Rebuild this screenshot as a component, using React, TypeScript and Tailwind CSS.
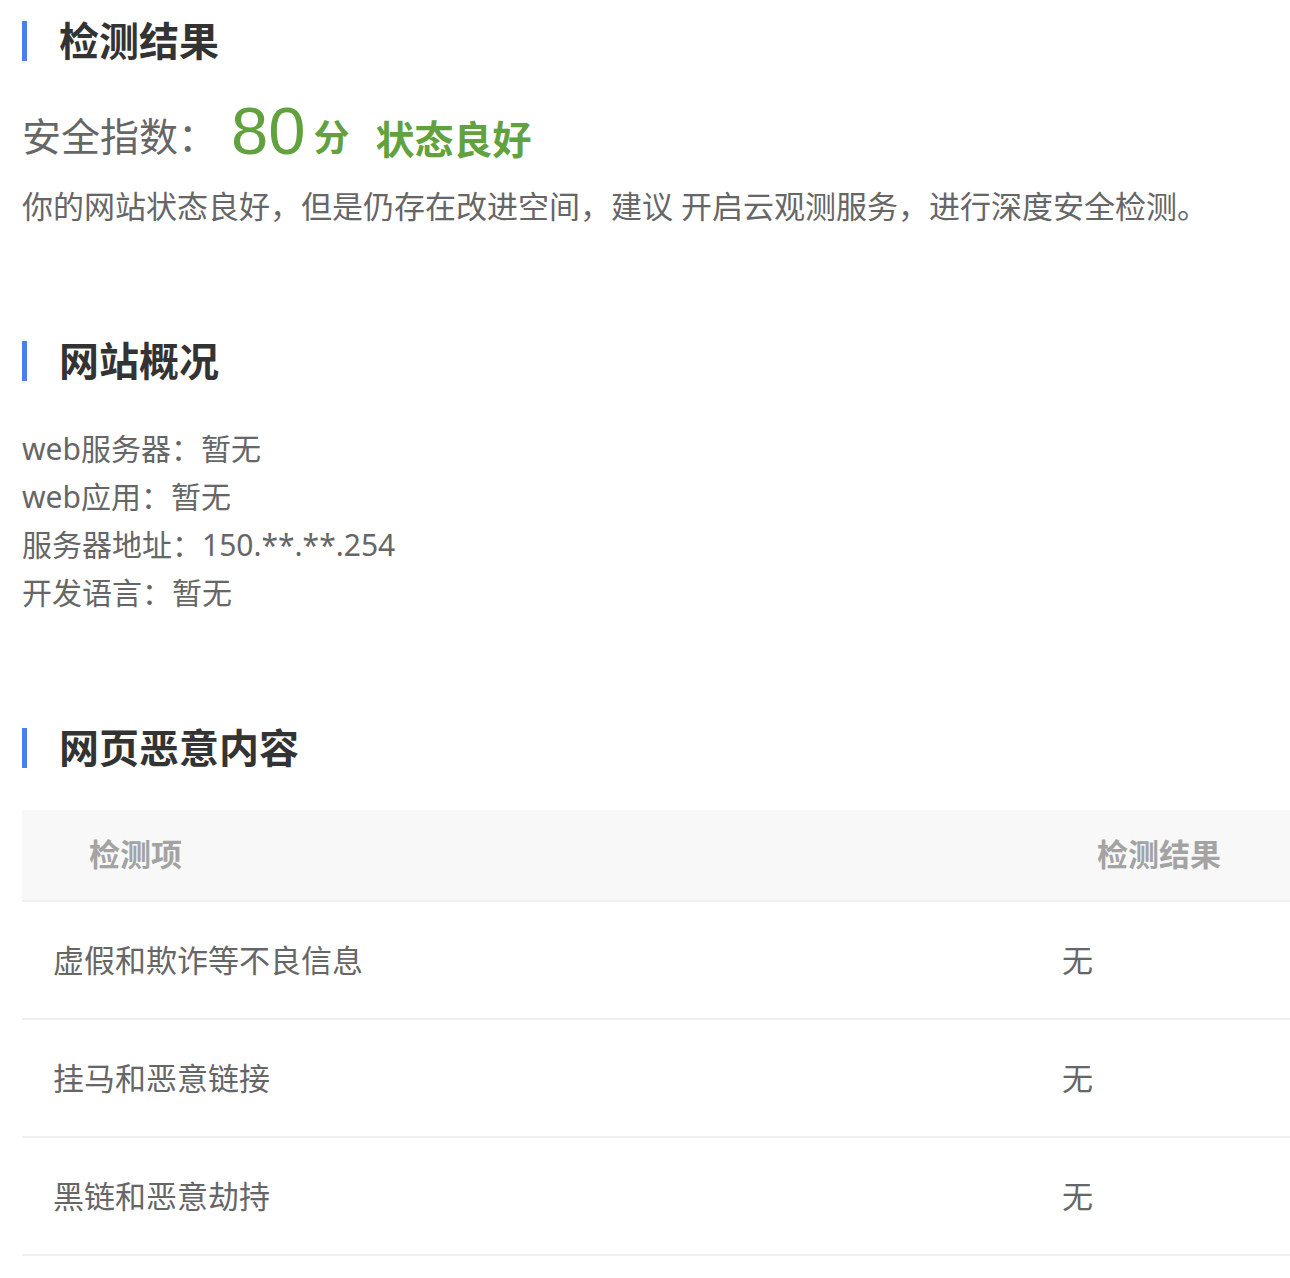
import type { FC } from "react";

const font = {
	fontFamily: '"Noto Sans", "Noto Sans CJK SC", sans-serif',
};

const SectionTitle: FC<{ title: string; className?: string }> = ({
	title,
	className = "",
}) => (
	<div className={`flex h-[40px] items-center ${className}`}>
		<div className="h-[40px] w-[5px] bg-[#4b7ef0]" />
		<h2 className="ml-[32px] text-[40px] font-bold leading-[40px] text-[#333]">
			{title}
		</h2>
	</div>
);

const overview = [
	{ label: "web服务器：", value: "暂无" },
	{ label: "web应用：", value: "暂无" },
	{ label: "服务器地址：", value: "150.**.**.254" },
	{ label: "开发语言：", value: "暂无" },
];

const checks = [
	{ name: "虚假和欺诈等不良信息", result: "无" },
	{ name: "挂马和恶意链接", result: "无" },
	{ name: "黑链和恶意劫持", result: "无" },
];

export default function App() {
	return (
		<div className="min-h-[1278px] bg-white pl-[22px] pt-[21px]" style={font}>
			<SectionTitle title="检测结果" />

			{/* score */}
			<div className="mt-[39px] flex h-[70px] items-center">
				<span className="text-[39px] leading-none text-[#666]">安全指数：</span>
				<span
					className="ml-[14px] pb-[10px] text-[67px] leading-none text-[#62a23e]"
					style={{ fontFamily: '"Liberation Sans", Arial, sans-serif' }}
				>
					80
				</span>
				<span className="ml-[8px] mt-[6px] text-[36px] font-bold leading-none text-[#62a23e]">
					分
				</span>
				<span className="ml-[26px] mt-[6px] text-[39px] font-bold leading-none text-[#62a23e]">
					状态良好
				</span>
			</div>
			<p className="mt-[16px] text-[31px] leading-[40px] text-[#666]">
				你的网站状态良好，但是仍存在改进空间，建议 开启云观测服务，进行深度安全检测。
			</p>

			<SectionTitle title="网站概况" className="mt-[115px]" />
			<div className="mt-[44px] text-[30px] leading-[48px] text-[#666]">
				{overview.map((item) => (
					<div key={item.label}>
						{item.label}
						{item.value}
					</div>
				))}
			</div>

			<SectionTitle title="网页恶意内容" className="mt-[111px]" />

			<div className="mt-[42px] text-[31px]">
				<div className="flex h-[92px] items-center border-b-2 border-[#efefef] bg-[#f8f8f8] pb-[2px] font-bold text-[#a3a3a3]">
					<div className="w-[1040px] pl-[67px]">检测项</div>
					<div className="pl-[35px]">检测结果</div>
				</div>
				{checks.map((row) => (
					<div
						key={row.name}
						className="flex h-[118px] items-center border-b-2 border-[#efefef] text-[#666]"
					>
						<div className="w-[1040px] pl-[31px]">{row.name}</div>
						<div>{row.result}</div>
					</div>
				))}
			</div>
		</div>
	);
}
